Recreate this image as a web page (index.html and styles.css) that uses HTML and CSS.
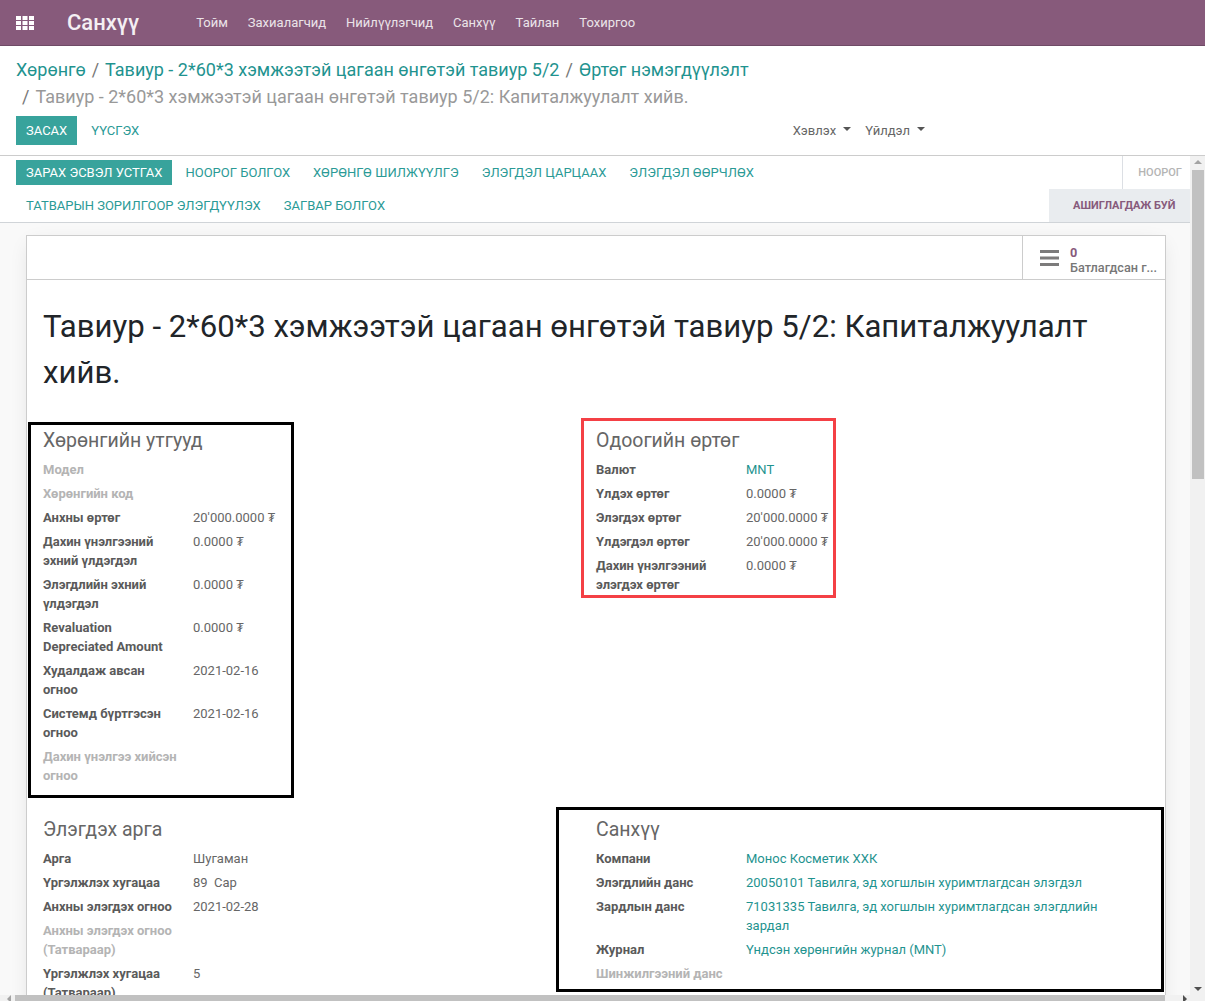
FILE: index.html
```html
<!DOCTYPE html>
<html lang="en">
<head>
  <meta charset="UTF-8" />
  <title>Санхүү</title>
  <link rel="stylesheet" href="styles.css">
</head>
<body>

<header class="navbar">
  <svg class="apps-icon" width="18" height="14" viewBox="0 0 18 14">
    <path fill="#fff" d="M0 0h5v4H0zM6.500 0h5v4h-5zM13 0h5v4h-5zM0 5h5v4H0zM6.500 5h5v4h-5zM13 5h5v4h-5zM0 10h5v4H0zM6.500 10h5v4h-5zM13 10h5v4h-5z"/>
  </svg>
  <span class="brand">Санхүү</span>
  <nav class="menu">
    <a>Тойм</a>
    <a>Захиалагчид</a>
    <a>Нийлүүлэгчид</a>
    <a>Санхүү</a>
    <a>Тайлан</a>
    <a>Тохиргоо</a>
  </nav>
</header>

<section class="control-panel">
  <div class="breadcrumb">
    <a>Хөрөнгө</a><span class="sep">/</span><a>Тавиур - 2*60*3 хэмжээтэй цагаан өнгөтэй тавиур 5/2</a><span class="sep">/</span><a>Өртөг нэмэгдүүлэлт</a>
  </div>
  <div class="breadcrumb current">
    <span class="sep">/</span>Тавиур - 2*60*3 хэмжээтэй цагаан өнгөтэй тавиур 5/2: Капиталжуулалт хийв.
  </div>
  <div class="cp-buttons">
    <div class="cp-left">
      <a class="btn primary">ЗАСАХ</a>
      <a class="btn">ҮҮСГЭХ</a>
    </div>
    <div class="cp-right">
      <a class="dropdown">Хэвлэх<i class="caret"></i></a>
      <a class="dropdown">Үйлдэл<i class="caret"></i></a>
    </div>
  </div>
</section>

<div class="work-area">
  <div class="main">
    <div class="statusbar">
      <div class="actions">
        <a class="btn small primary">ЗАРАХ ЭСВЭЛ УСТГАХ</a>
        <a class="btn small">НООРОГ БОЛГОХ</a>
        <a class="btn small">ХӨРӨНГӨ ШИЛЖҮҮЛГЭ</a>
        <a class="btn small">ЭЛЭГДЭЛ ЦАРЦААХ</a>
        <a class="btn small">ЭЛЭГДЭЛ ӨӨРЧЛӨХ</a>
        <a class="btn small">ТАТВАРЫН ЗОРИЛГООР ЭЛЭГДҮҮЛЭХ</a>
        <a class="btn small">ЗАГВАР БОЛГОХ</a>
      </div>
      <div class="stages">
        <span class="stage">НООРОГ</span>
        <span class="stage active">АШИГЛАГДАЖ БУЙ</span>
      </div>
    </div>

    <div class="content">
      <div class="sheet">
        <div class="button-box">
          <div class="stat">
            <svg width="19" height="16" viewBox="0 0 19 16">
              <path fill="#7c7b7b" d="M0 0h19v3H0zM0 6.500h19v3H0zM0 13h19v3H0z"/>
            </svg>
            <div class="stat-text">
              <b>0</b>
              <span>Батлагдсан г...</span>
            </div>
          </div>
        </div>

        <h1 class="title">Тавиур - 2*60*3 хэмжээтэй цагаан өнгөтэй тавиур 5/2: Капиталжуулалт хийв.</h1>

        <div class="groups first">
          <div class="group">
            <h3>Хөрөнгийн утгууд</h3>
            <div class="row"><label class="muted">Модел</label><span></span></div>
            <div class="row"><label class="muted">Хөрөнгийн код</label><span></span></div>
            <div class="row"><label>Анхны өртөг</label><span>20'000.0000 ₮</span></div>
            <div class="row"><label>Дахин үнэлгээний эхний үлдэгдэл</label><span>0.0000 ₮</span></div>
            <div class="row"><label>Элэгдлийн эхний үлдэгдэл</label><span>0.0000 ₮</span></div>
            <div class="row"><label>Revaluation Depreciated Amount</label><span>0.0000 ₮</span></div>
            <div class="row"><label>Худалдаж авсан огноо</label><span>2021-02-16</span></div>
            <div class="row"><label>Системд бүртгэсэн огноо</label><span>2021-02-16</span></div>
            <div class="row"><label class="muted">Дахин үнэлгээ хийсэн огноо</label><span></span></div>
          </div>
          <div class="group">
            <h3>Одоогийн өртөг</h3>
            <div class="row"><label>Валют</label><a>MNT</a></div>
            <div class="row"><label>Үлдэх өртөг</label><span>0.0000 ₮</span></div>
            <div class="row"><label>Элэгдэх өртөг</label><span>20'000.0000 ₮</span></div>
            <div class="row"><label>Үлдэгдэл өртөг</label><span>20'000.0000 ₮</span></div>
            <div class="row"><label>Дахин үнэлгээний элэгдэх өртөг</label><span>0.0000 ₮</span></div>
          </div>
        </div>

        <div class="groups">
          <div class="group">
            <h3>Элэгдэх арга</h3>
            <div class="row"><label>Арга</label><span>Шугаман</span></div>
            <div class="row"><label>Үргэлжлэх хугацаа</label><span>89&nbsp; Сар</span></div>
            <div class="row"><label>Анхны элэгдэх огноо</label><span>2021-02-28</span></div>
            <div class="row"><label class="muted">Анхны элэгдэх огноо (Татвараар)</label><span></span></div>
            <div class="row"><label>Үргэлжлэх хугацаа (Татвараар)</label><span>5</span></div>
          </div>
          <div class="group">
            <h3>Санхүү</h3>
            <div class="row"><label>Компани</label><a>Монос Косметик ХХК</a></div>
            <div class="row"><label>Элэгдлийн данс</label><a>20050101 Тавилга, эд хогшлын хуримтлагдсан элэгдэл</a></div>
            <div class="row"><label>Зардлын данс</label><a>71031335 Тавилга, эд хогшлын хуримтлагдсан элэгдлийн зардал</a></div>
            <div class="row"><label>Журнал</label><a>Үндсэн хөрөнгийн журнал (MNT)</a></div>
            <div class="row"><label class="muted">Шинжилгээний данс</label><span></span></div>
          </div>
        </div>

        <!-- annotation frames drawn over the form -->
        <div class="frame black frame-values"></div>
        <div class="frame red frame-current"></div>
        <div class="frame black frame-finance"></div>
      </div>
    </div>
  </div>

  <div class="vscroll">
    <i class="arrow up"></i>
    <div class="vtrack"><div class="vthumb"></div></div>
    <i class="arrow down"></i>
  </div>
</div>

<div class="hscroll">
  <i class="arrow left"></i>
  <div class="hthumb"></div>
  <i class="arrow right"></i>
</div>

</body>
</html>
```

FILE: styles.css
```css
* { box-sizing: border-box; }

body {
  margin: 0;
  width: 1205px;
  height: 1001px;
  overflow: hidden;
  display: flex;
  flex-direction: column;
  font-family: Roboto, "Noto Sans", sans-serif;
  font-size: 13px;
  line-height: 19px;
  color: #666;
  background: #fff;
}

a { color: #1f938f; text-decoration: none; }

/* top bar */
.navbar {
  flex: none;
  height: 46px;
  display: flex;
  align-items: center;
  padding-left: 16px;
  background: #875a7b;
  border-bottom: 1px solid #6f4b66;
  color: #fff;
}
.apps-icon { flex: none; }
.brand {
  margin-left: 33px;
  font-size: 22px;
  font-weight: 500;
  color: #f4eff3;
}
.menu { display: flex; gap: 20px; margin-left: 57px; }
.menu a { color: #ebe4e9; font-size: 13px; }

/* control panel */
.control-panel {
  flex: none;
  height: 110px;
  padding: 10px 16px 0;
  border-bottom: 1px solid #ccc;
}
.breadcrumb { font-size: 18px; line-height: 27px; white-space: nowrap; }
.breadcrumb .sep { color: #777; margin: 0 6px; }
.breadcrumb.current { color: #999; }
.cp-buttons {
  display: flex;
  justify-content: space-between;
  margin-top: 6px;
}
.cp-left { display: flex; gap: 4px; }
.cp-right { display: flex; gap: 14px; align-items: center; margin-right: 264px; }
.dropdown { color: #666; display: flex; align-items: center; }
.caret {
  width: 0;
  height: 0;
  margin-left: 7px;
  margin-top: -3px;
  border: 4px solid transparent;
  border-top-color: #555;
  border-bottom: 0;
}

.btn {
  display: block;
  padding: 5px 10px;
  height: 29px;
  line-height: 19px;
  white-space: nowrap;
  color: #2a9a96;
}
.btn.primary { background: #38a39c; color: #fff; }
.btn.small { height: 25px; padding: 3px 10px; }

/* middle area: form plus its scrollbar */
.work-area { flex: 1; min-height: 0; display: flex; }
.main { flex: 1; min-width: 0; display: flex; flex-direction: column; overflow: hidden; }

.statusbar {
  flex: none;
  height: 67px;
  display: flex;
  justify-content: space-between;
  border-bottom: 1px solid #d0d4d8;
}
.actions {
  width: 790px;
  padding: 4px 0 0 16px;
  display: flex;
  flex-wrap: wrap;
  align-content: flex-start;
  column-gap: 3px;
  row-gap: 8px;
}
.stages { display: flex; flex-direction: column; align-items: flex-end; }
.stage {
  height: 33px;
  padding: 0 8px 0 15px;
  line-height: 33px;
  font-size: 11px;
  font-weight: 500;
  color: #b4b4b4;
  border-left: 1px solid #dcdfe4;
}
.stage.active {
  width: 141px;
  padding: 0 0 0 24px;
  font-weight: 700;
  color: #875a7b;
  background: #e9ecef;
  border-left: 0;
}

/* form sheet */
.content { flex: 1; min-height: 0; padding: 12px 24px 0 26px; background: #f9f9f9; overflow: hidden; }
.sheet {
  position: relative;
  height: 900px;
  background: #fff;
  border: 1px solid #ccc;
  box-shadow: 0 5px 20px -5px rgba(0, 0, 0, 0.12);
}
.button-box {
  height: 44px;
  display: flex;
  justify-content: flex-end;
  border-bottom: 1px solid #ccc;
}
.stat {
  width: 143px;
  display: flex;
  align-items: center;
  gap: 11px;
  padding-left: 17px;
  border-left: 1px solid #ccc;
}
.stat-text { display: flex; flex-direction: column; line-height: 15px; font-size: 12.700px; padding-top: 5px; }
.stat-text b { color: #875a7b; font-weight: 700; }
.stat-text span { font-weight: 500; color: #777; white-space: nowrap; }

.title {
  margin: 24px 16px 0;
  font-size: 31.150px;
  line-height: 46px;
  font-weight: 400;
  color: #212529;
}

.groups {
  display: grid;
  grid-template-columns: 553px 553px;
  padding-left: 16px;
}
.groups.first { margin-top: 30px; }
.groups + .groups { margin-top: 25px; }
.group { padding-right: 16px; }
.group h3 {
  margin: 0 0 4px;
  font-size: 19.500px;
  line-height: 30px;
  font-weight: 400;
  color: #666;
}
.row {
  display: grid;
  grid-template-columns: 150px 1fr;
  padding-bottom: 5px;
}
.row label { font-weight: 700; padding-right: 14px; color: #5a5a5a; }
.row label.muted { color: #b4b4b4; }
.row a { color: #1f938f; }

/* annotations */
.frame { position: absolute; border: 3px solid #000; pointer-events: none; }
.frame.red { border-color: #f44045; }
.frame-values { left: 1px; top: 186px; width: 266px; height: 376px; }
.frame-current { left: 554px; top: 182px; width: 255px; height: 180px; }
.frame-finance { left: 529px; top: 571px; width: 608px; height: 185px; }

/* scrollbars */
.vscroll {
  flex: none;
  width: 15px;
  display: flex;
  flex-direction: column;
  align-items: center;
  background: #f1f1f1;
  padding: 4px 0;
}
.vtrack { flex: 1; width: 100%; padding: 6px 1px 0 2px; }
.vthumb { height: 309px; background: #c1c1c1; }
.hscroll {
  flex: none;
  height: 6px;
  display: flex;
  align-items: flex-start;
  background: #f1f1f1;
  overflow: hidden;
}
.hthumb { width: 1150px; height: 6px; background: #c1c1c1; margin-left: 4px; }
.arrow { width: 0; height: 0; border: 4px solid transparent; flex: none; }
.arrow.up { border-top: 0; border-bottom-color: #a3a3a3; }
.arrow.down { border-bottom: 0; border-top-color: #505050; }
.arrow.left { margin-left: 7px; border-left: 0; border-right-color: #a3a3a3; }
.arrow.right { margin-left: 18px; border-right: 0; border-left-color: #505050; }
```
